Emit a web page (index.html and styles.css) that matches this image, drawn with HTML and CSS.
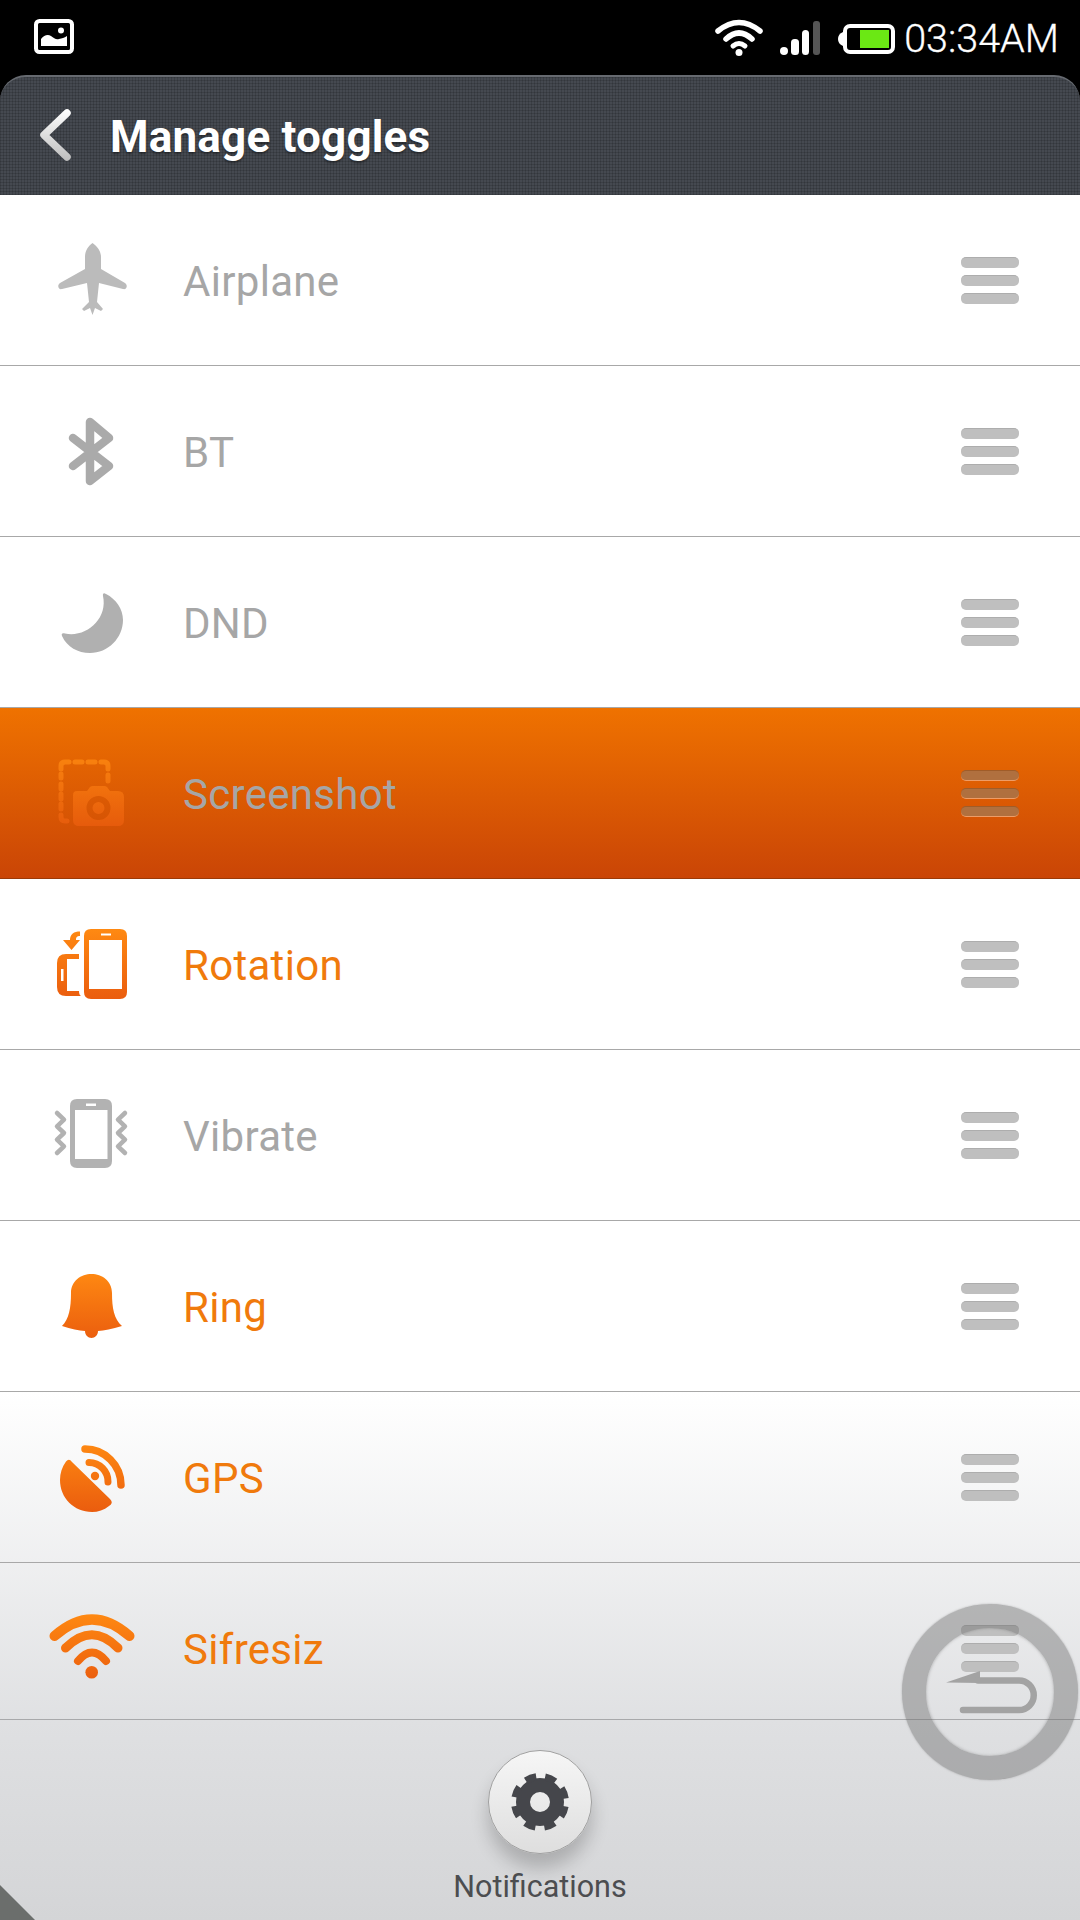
FILE: index.html
```html
<!DOCTYPE html>
<html lang="en">
<head>
  <meta charset="UTF-8">
  <meta name="viewport" content="width=device-width, initial-scale=1.0">
  <title>Manage toggles</title>
  <link rel="stylesheet" href="styles.css">
</head>
<body>
<svg class="defs" width="0" height="0">
  <defs>
    <linearGradient id="org" gradientUnits="userSpaceOnUse" x1="0" y1="12" x2="0" y2="84">
      <stop offset="0" stop-color="#ff8a12"/>
      <stop offset="1" stop-color="#ea5c0e"/>
    </linearGradient>
    <linearGradient id="chev" gradientUnits="userSpaceOnUse" x1="0" y1="0" x2="0" y2="52">
      <stop offset="0" stop-color="#ffffff"/>
      <stop offset="1" stop-color="#bdbdbd"/>
    </linearGradient>
  </defs>
</svg>

<div class="phone">
  <div class="status">
    <svg class="pic" width="40" height="35" viewBox="0 0 40 35">
      <rect x="2" y="2" width="36" height="31" rx="3.500" fill="none" stroke="#fff" stroke-width="4"/>
      <circle cx="27" cy="11.500" r="3" fill="#fff"/>
      <path d="M7 27V20C10 16 14 15 17 17C20 19 22 21 25 20C28 19 30 19 33 17V27Z" fill="#fff"/>
    </svg>
    <div class="status-right">
      <svg width="48" height="37" viewBox="0 0 48 37">
        <g fill="none" stroke="#fff" stroke-linecap="round">
          <path d="M3 12Q24 -5 45 12" stroke-width="5.500"/>
          <path d="M11 20Q24 8 37 20" stroke-width="5.500"/>
          <path d="M18 27Q24 22 30 27" stroke-width="5"/>
        </g>
        <circle cx="24" cy="33.500" r="3.500" fill="#fff"/>
      </svg>
      <svg class="signal" width="40" height="34" viewBox="0 0 40 34">
        <circle cx="4" cy="30" r="4" fill="#fff"/>
        <rect x="11" y="18" width="8" height="16" rx="3.500" fill="#fff"/>
        <rect x="22" y="9" width="7" height="25" rx="3.500" fill="#fff"/>
        <rect x="33" y="0" width="7" height="34" rx="3" fill="#555"/>
      </svg>
      <svg class="battery" width="57" height="30" viewBox="0 0 57 30">
        <path d="M5 8V22Q0 20 0 15Q0 10 5 8Z" fill="#fff"/>
        <rect x="7" y="2" width="48" height="26" rx="5" fill="none" stroke="#fff" stroke-width="4"/>
        <rect x="22" y="6" width="29" height="18" fill="#6be814"/>
      </svg>
      <span class="time">03:34AM</span>
    </div>
  </div>

  <div class="topbar">
    <svg class="back" width="32" height="52" viewBox="0 0 32 52">
      <path d="M28 4L5 26L28 48" fill="none" stroke="url(#chev)" stroke-width="7.500" stroke-linecap="round" stroke-linejoin="round"/>
    </svg>
    <h1 class="title">Manage toggles</h1>
  </div>

  <ul class="list">
    <li class="row">
      <svg class="ico" viewBox="0 0 96 96"><path fill="#bbb" d="M48.500 11C53 14 57 19 57 25V37L81 51C84 53 83 58 79 57L55 51L53 70L59 77L57 79L51 76L48.500 83L46 76L40 79L38 77L45 70L43 51L18 57C14 58 13 53 16 51L41 37V25C41 19 44 14 48.500 11Z"/></svg>
      <span class="label">Airplane</span>
      <div class="handle"><i></i><i></i><i></i></div>
    </li>
    <li class="row">
      <svg class="ico" viewBox="0 0 96 96"><path fill="none" stroke="#aaa" stroke-width="8.500" stroke-linecap="round" stroke-linejoin="round" d="M29 35L65 63L46 78V19L65 35L29 63"/></svg>
      <span class="label">BT</span>
      <div class="handle"><i></i><i></i><i></i></div>
    </li>
    <li class="row">
      <svg class="ico" viewBox="0 0 96 96"><path fill="#b0b0b0" d="M62 20C72 25 79 35 79 46C79 64 64 79 46 79C34 79 23 73 18 62C17 59 19 59 21 59.500C42 64 64 45 59 22C58.500 19 60 18.500 62 20Z"/></svg>
      <span class="label">DND</span>
      <div class="handle"><i></i><i></i><i></i></div>
    </li>
    <li class="row row-active">
      <svg class="ico" viewBox="0 0 96 96">
        <g fill="none" stroke="url(#org)" stroke-width="5" stroke-linecap="round">
          <path d="M17 24V21Q17 17 21 17H25"/>
          <path d="M31 17H38M44 17H51"/>
          <path d="M57 17H60Q64 17 64 21V24"/>
          <path d="M64 30V36"/>
          <path d="M17 29V33M17 39V44M17 49V54M17 59V64"/>
          <path d="M17 70V72Q17 76 21 76H23"/>
        </g>
        <path fill="url(#org)" fill-rule="evenodd" d="M33 46H43L46 42Q47 41 49 41H60Q62 41 63 42L66 46H74Q80 46 80 52V75Q80 81 74 81H35Q29 81 29 75V50Q29 46 33 46ZM54.500 51A12 12 0 1 0 54.500 75A12 12 0 1 0 54.500 51ZM54.500 57A6 6 0 1 1 54.500 69A6 6 0 1 1 54.500 57Z"/>
      </svg>
      <span class="label">Screenshot</span>
      <div class="handle"><i></i><i></i><i></i></div>
    </li>
    <li class="row row-on">
      <svg class="ico" viewBox="0 0 96 96">
        <path fill="url(#org)" fill-rule="evenodd" d="M47 13H76Q83 13 83 20V76Q83 83 76 83H47Q40 83 40 76V20Q40 13 47 13ZM45 24V73H78V24ZM57 17.500V19.500H67V17.500Z"/>
        <path fill="url(#org)" fill-rule="evenodd" d="M22 38H35V43H23V75H35Q35 79 37 80H22Q13 80 13 71V47Q13 38 22 38ZM17 53V65H19.500V53Z"/>
        <path fill="url(#org)" d="M36 15.500C30 15.500 26 18 26 24H19L27.500 34L36 24H32C32 21 33 20 36 20Z"/>
      </svg>
      <span class="label">Rotation</span>
      <div class="handle"><i></i><i></i><i></i></div>
    </li>
    <li class="row">
      <svg class="ico" viewBox="0 0 96 96">
        <path fill="#b2b2b2" fill-rule="evenodd" d="M33 12H61Q68 12 68 19V74Q68 81 61 81H33Q26 81 26 74V19Q26 12 33 12ZM31 23V72H63.500V23ZM42 16.500V19H52V16.500Z"/>
        <g fill="none" stroke="#b2b2b2" stroke-width="4.500" stroke-linecap="round" stroke-linejoin="round">
          <path d="M13 26L20 32.700L13 39.300L20 46L13 52.700L20 59.300L13 66"/>
          <path d="M81 26L74 32.700L81 39.300L74 46L81 52.700L74 59.300L81 66"/>
        </g>
      </svg>
      <span class="label">Vibrate</span>
      <div class="handle"><i></i><i></i><i></i></div>
    </li>
    <li class="row row-on">
      <svg class="ico" viewBox="0 0 96 96"><path fill="url(#org)" d="M47.500 16C58 16 68 23 68 35C68 50 70 61 78 68C68 71 60 72.500 54 73C54 77 51 80 47.500 80C44 80 41 77 41 73C35 72.500 27 71 18 68C25 61 27 50 27 35C27 23 37 16 47.500 16Z"/></svg>
      <span class="label">Ring</span>
      <div class="handle"><i></i><i></i><i></i></div>
    </li>
    <li class="row row-on">
      <svg class="ico" viewBox="0 0 96 96">
        <path fill="url(#org)" d="M22 32.500Q25 29 28 33L66 70Q70 74 65 77C60 81 54 83 48 83C30 83 16 69 16 51C16 44 18 38 22 32.500Z"/>
        <circle cx="51" cy="47" r="4.200" fill="url(#org)"/>
        <g fill="none" stroke="url(#org)" stroke-linecap="round">
          <path d="M41 20A36 36 0 0 1 77 56" stroke-width="7.500"/>
          <path d="M45 33.500A19 19 0 0 1 64 53" stroke-width="7"/>
        </g>
      </svg>
      <span class="label">GPS</span>
      <div class="handle"><i></i><i></i><i></i></div>
    </li>
    <li class="row row-on">
      <svg class="ico" viewBox="0 0 96 96">
        <g fill="none" stroke="url(#org)" stroke-linecap="round">
          <path d="M10.500 36Q48 3 85.500 36" stroke-width="10"/>
          <path d="M21.500 48Q48 21.400 74 48" stroke-width="9"/>
          <path d="M34 61Q48 44 62 61" stroke-width="8"/>
        </g>
        <circle cx="47.700" cy="72.300" r="6.300" fill="url(#org)"/>
      </svg>
      <span class="label">Sifresiz</span>
      <div class="handle"><i></i><i></i><i></i></div>
    </li>
  </ul>

  <div class="footer">
    <div class="gear-btn">
      <svg width="64" height="64" viewBox="0 0 64 64">
        <circle cx="32" cy="32" r="17" fill="none" stroke="#45464b" stroke-width="14"/>
        <circle cx="32" cy="32" r="25.500" fill="none" stroke="#45464b" stroke-width="7" stroke-dasharray="11 9.030" transform="rotate(9.900 32 32)"/>
      </svg>
    </div>
    <span class="foot-label">Notifications</span>
    <div class="corner"></div>
  </div>

  <div class="float-back">
    <svg width="128" height="128" viewBox="0 0 128 128">
      <path d="M20 54.500L54 43V55Z" fill="#a3a3a3"/>
      <path d="M52 52.500H93A14.700 14.700 0 0 1 93 82H37" fill="none" stroke="#a3a3a3" stroke-width="6.500" stroke-linecap="round"/>
    </svg>
  </div>
</div>
</body>
</html>
```

FILE: styles.css
```css
*{margin:0;padding:0;box-sizing:border-box;}
body{background:#000;font-family:Roboto,"Liberation Sans",sans-serif;}
.defs{position:absolute;}
.phone{width:1080px;height:1920px;display:flex;flex-direction:column;position:relative;overflow:hidden;background:#000;}

.status{height:75px;flex:none;display:flex;align-items:center;justify-content:space-between;padding:0 21px 0 34px;color:#fff;}
.pic{margin-top:-2px;}
.status-right{display:flex;align-items:center;}
.signal{margin-left:17px;margin-top:1px;}
.battery{margin-left:18px;margin-top:2px;}
.time{font-size:39.500px;font-weight:300;line-height:40px;margin-left:9px;margin-top:3px;-webkit-text-stroke:.3px #fff;}

.topbar{
  height:120px;
  flex:none;
  display:flex;
  align-items:center;
  padding-left:39px;
  border-top:2px solid #666a70;
  border-radius:26px 26px 0 0;
  background-color:#454950;
  background-image:
    linear-gradient(to right,rgba(0,0,0,.14) 1px,transparent 1px),
    linear-gradient(to bottom,rgba(0,0,0,.14) 1px,transparent 1px);
  background-size:3px 3px;
}
.back{margin-top:-2px;}
.title{font-size:44px;letter-spacing:.2px;font-weight:700;color:#fff;margin-left:39px;line-height:50px;margin-top:1px;text-shadow:0 2px 2px rgba(0,0,0,.35);}

.list{flex:1;list-style:none;overflow:hidden;background:linear-gradient(to bottom,#fff 0,#fff 1196px,#e0e1e3 100%);border-bottom:1px solid #a8a9ab;}
.row{height:171px;border-bottom:1px solid #a8a8a8;display:flex;align-items:center;padding:0 61px 0 44px;flex:none;}
.ico{width:96px;height:96px;flex:none;}
.label{font-size:42px;letter-spacing:.3px;color:#a6a6a6;margin-left:43px;margin-top:2px;flex:1;}
.row-on .label{color:#f07a0c;}
.handle{display:flex;flex-direction:column;gap:7px;}
.handle i{display:block;width:58px;height:11px;border-radius:5px;background:#bfbfbf;border-top:1px solid #adadad;}

.row-active{background:linear-gradient(to bottom,#ef7200,#ca4506);border-bottom-color:#9c3a08;}
.row-active .ico{opacity:.8;}
.row-active .handle i{background:#b0703f;border-top:1px solid #a05c28;border-bottom:1px solid #ee9c66;}

.footer{height:200px;flex:none;position:relative;display:flex;flex-direction:column;align-items:center;background:linear-gradient(to bottom,#dfe0e2,#d4d5d7);}
.gear-btn{
  width:104px;
  height:104px;
  margin-top:30px;
  border-radius:50%;
  display:flex;
  align-items:center;
  justify-content:center;
  border:1px solid #a0a0a0;
  background:linear-gradient(to bottom,#f6f6f6,#dedede);
  box-shadow:0 14px 18px rgba(0,0,0,.2);
}
.foot-label{font-size:30.500px;line-height:36px;color:#4c4d50;margin-top:15px;}
.corner{position:absolute;left:0;bottom:0;width:0;height:0;border-left:35px solid #6b6e6c;border-top:35px solid transparent;}

.float-back{
  position:absolute;
  left:902px;
  top:1604px;
  width:176px;
  height:176px;
  border-radius:50%;
  border:24px solid rgba(110,110,110,.44);
  box-shadow:0 0 2px rgba(110,110,110,.5),inset 0 0 3px rgba(110,110,110,.5);
}
.float-back svg{display:block;}
```
